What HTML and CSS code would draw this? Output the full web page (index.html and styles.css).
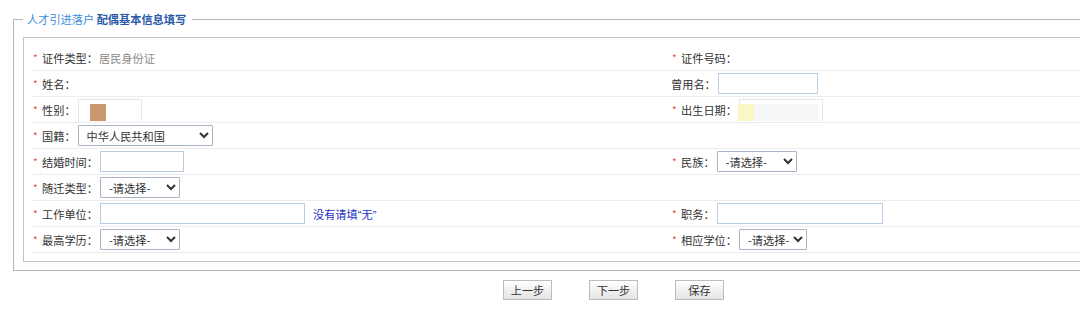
FILE: index.html
```html
<!DOCTYPE html>
<html lang="zh-CN">
<head>
  <meta charset="UTF-8" />
  <title>配偶基本信息填写</title>
  <link rel="stylesheet" href="styles.css">
</head>
<body>
  <div class="page">
    <fieldset class="box">
      <legend><span class="lg-sub">人才引进落户</span> <b class="lg-main">配偶基本信息填写</b></legend>
      <div class="inner">
        <div class="row">
          <div class="cell"><i class="req">*</i>证件类型：<span class="val">居民身份证</span></div>
          <div class="cell"><i class="req">*</i>证件号码：</div>
        </div>
        <div class="row">
          <div class="cell"><i class="req">*</i>姓名：</div>
          <div class="cell">曾用名：<input class="txt w100" type="text"></div>
        </div>
        <div class="row">
          <div class="cell"><i class="req">*</i>性别：<span class="blur w64"><span class="blot brown"></span></span></div>
          <div class="cell"><i class="req">*</i>出生日期：<span class="blur w84"><span class="blot yellow"></span><span class="haze"></span></span></div>
        </div>
        <div class="row">
          <div class="cell"><i class="req">*</i>国籍：<select class="sel w135"><option>中华人民共和国</option></select></div>
          <div class="cell"></div>
        </div>
        <div class="row">
          <div class="cell"><i class="req">*</i>结婚时间：<input class="txt w84" type="text"></div>
          <div class="cell"><i class="req">*</i>民族：<select class="sel w80"><option>-请选择-</option></select></div>
        </div>
        <div class="row">
          <div class="cell"><i class="req">*</i>随迁类型：<select class="sel w80"><option>-请选择-</option></select></div>
          <div class="cell"></div>
        </div>
        <div class="row">
          <div class="cell"><i class="req">*</i>工作单位：<input class="txt w205" type="text"><span class="hint">没有请填<span class="q">“</span>无<span class="q">”</span></span></div>
          <div class="cell"><i class="req">*</i>职务：<input class="txt w166" type="text"></div>
        </div>
        <div class="row">
          <div class="cell"><i class="req">*</i>最高学历：<select class="sel w80"><option>-请选择-</option></select></div>
          <div class="cell"><i class="req">*</i>相应学位：<select class="sel w68"><option>-请选择-</option></select></div>
        </div>
      </div>
    </fieldset>
    <div class="actions">
      <button class="btn">上一步</button>
      <button class="btn">下一步</button>
      <button class="btn">保存</button>
    </div>
  </div>
</body>
</html>
```

FILE: styles.css
```css
body {
  margin: 0;
  background: #fff;
  color: #333;
  font-family: "Microsoft YaHei", "Noto Sans CJK SC", "Noto Sans", sans-serif;
  font-size: 11.2px;
  overflow: hidden;
}
.page {
  width: 1201px;
  padding: 11px 13px 0;
}
.box {
  margin: 0;
  padding: 10px 0 8px 9px;
  border: 1px solid #b5b5b5;
}
.box legend {
  padding: 0 6px 0 4px;
  line-height: 16px;
}
.lg-sub { color: #3b8ddb; }
.lg-main { color: #2a5aa6; font-weight: bold; }
.inner {
  border: 1px solid #c4c4c4;
  border-right: none;
  padding: 7px 0 8px 8px;
}
.row {
  display: grid;
  grid-template-columns: 639px 1fr;
  height: 25px;
  border-bottom: 1px solid #ececec;
}
.cell {
  display: flex;
  align-items: center;
  white-space: nowrap;
}
.req {
  font-style: normal;
  color: #e64b4b;
  font-size: 10px;
  width: 7px;
  margin: 0 2px 0 1px;
}
.val { color: #8a8a8a; margin-left: 1px; }
.txt {
  box-sizing: border-box;
  height: 21px;
  margin: 0 0 0 2px;
  padding: 0 3px;
  border: 1px solid #b7cde4;
  font: inherit;
}
.sel {
  box-sizing: border-box;
  height: 21px;
  margin: 0 0 0 2px;
  padding: 0 0 0 4px;
  border: 1px solid #a7b5c6;
  border-radius: 1px;
  background: #fff;
  color: #333;
  font: inherit;
}
.w64 { width: 64px; }
.w68 { width: 68px; }
.w80 { width: 80px; }
.w84 { width: 84px; }
.w100 { width: 100px; }
.w135 { width: 135px; }
.w166 { width: 166px; }
.w205 { width: 205px; }
.blur {
  box-sizing: border-box;
  display: flex;
  align-items: flex-end;
  height: 22px;
  margin-left: 2px;
  border: 1px solid #e2e6ec;
  border-bottom: none;
}
.blot { width: 16px; height: 17px; }
.brown { background: #c9986c; margin-left: 11px; }
.yellow { background: #fbf6c6; margin-left: -2px; }
.haze { flex: 1; height: 17px; background: #f6f7f9; margin-right: 4px; }
.hint { color: #2330c8; margin-left: 8px; }
.q { font-family: "Liberation Sans", sans-serif; }
.actions {
  display: flex;
  justify-content: center;
  gap: 37px;
  margin-top: 9px;
}
.btn {
  width: 49px;
  height: 20px;
  padding: 0;
  border: 1px solid #bdbdbd;
  background: linear-gradient(#ffffff, #e4e4e4);
  color: #333;
  font: inherit;
  line-height: 18px;
}
```
